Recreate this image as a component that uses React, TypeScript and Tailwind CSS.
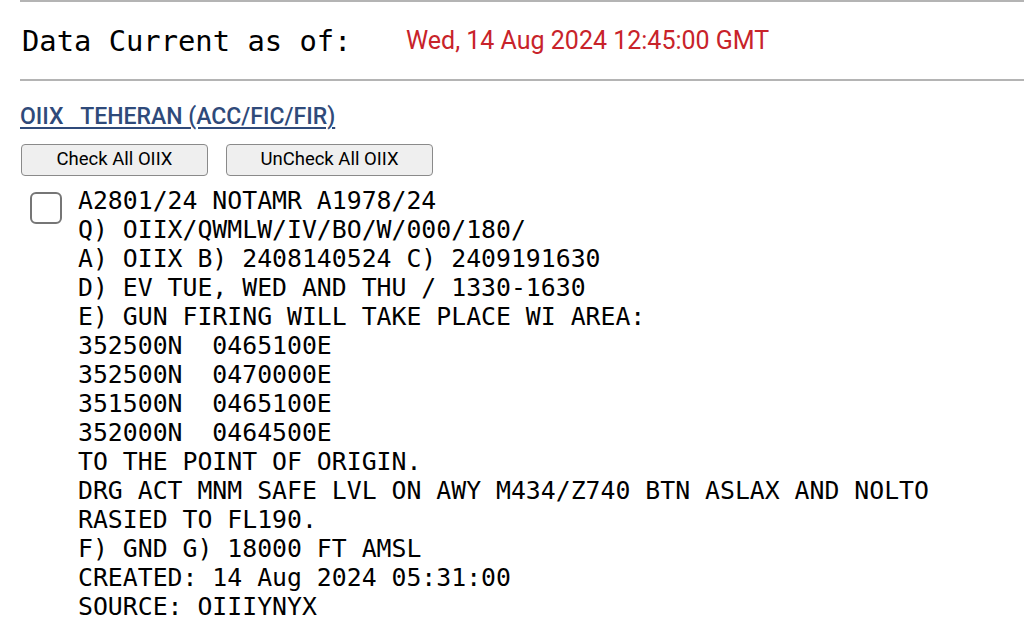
const NOTAM_LINES = [
  'A2801/24 NOTAMR A1978/24',
  'Q) OIIX/QWMLW/IV/BO/W/000/180/',
  'A) OIIX B) 2408140524 C) 2409191630',
  'D) EV TUE, WED AND THU / 1330-1630',
  'E) GUN FIRING WILL TAKE PLACE WI AREA:',
  '352500N  0465100E',
  '352500N  0470000E',
  '351500N  0465100E',
  '352000N  0464500E',
  'TO THE POINT OF ORIGIN.',
  'DRG ACT MNM SAFE LVL ON AWY M434/Z740 BTN ASLAX AND NOLTO',
  'RASIED TO FL190.',
  'F) GND G) 18000 FT AMSL',
  'CREATED: 14 Aug 2024 05:31:00',
  'SOURCE: OIIIYNYX',
]

const mono = { fontFamily: '"DejaVu Sans Mono", monospace' }

export default function App() {
  return (
    <div className="h-[634px] overflow-hidden bg-white pl-[20px]" style={{ fontFamily: 'Roboto, sans-serif' }}>
      <div className="h-[2px] bg-[#b4b4b4]" />

      {/* Header */}
      <div className="flex h-[77px] items-center pl-[2px]">
        <span className="w-[384px] shrink-0 text-[28.8px] leading-[34px] text-black" style={mono}>
          Data Current as of:
        </span>
        <span className="text-[25px] text-[#c8232a]">Wed, 14 Aug 2024 12:45:00 GMT</span>
      </div>

      <div className="h-[2px] bg-[#b4b4b4]" />

      {/* FIR */}
      <div className="pt-[22px]">
        <a href="#" className="whitespace-pre text-[23px] font-medium leading-[28px] text-[#2f4a7a] underline decoration-[1.5px] underline-offset-[3px]">
          {'OIIX   TEHERAN (ACC/FIC/FIR)'}
        </a>
      </div>

      <div className="mt-[13px] flex gap-[18px] pl-[1px]">
        <button className="h-[32px] w-[187px] rounded-[4px] border border-[#8a8a8a] bg-[#efefef] text-[18.5px] text-black">
          Check All OIIX
        </button>
        <button className="h-[32px] w-[207px] rounded-[4px] border border-[#8a8a8a] bg-[#efefef] text-[18.5px] text-black">
          UnCheck All OIIX
        </button>
      </div>

      {/* NOTAM */}
      <div className="mt-[10px] flex">
        <div className="pl-[10px] pt-[6px]">
          <div className="h-[32px] w-[32px] rounded-[6px] border-2 border-[#767676] bg-white" />
        </div>
        <div className="pl-[16px] text-[24.8px] leading-[29px] text-black" style={mono}>
          {NOTAM_LINES.map((l, i) => (
            <div key={i} className="whitespace-pre">{l}</div>
          ))}
        </div>
      </div>
    </div>
  )
}
